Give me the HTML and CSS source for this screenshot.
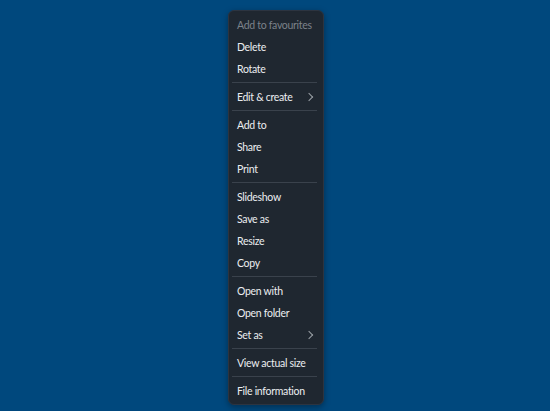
FILE: index.html
```html
<!DOCTYPE html>
<html lang="en">
<head>
    <meta charset="UTF-8">
    <title>Photo menu</title>
    <link rel="stylesheet" href="styles.css">
</head>
<body>
    <div class="desktop">
        <ul class="menu">
            <li class="item disabled">Add to favourites</li>
            <li class="item">Delete</li>
            <li class="item">Rotate</li>
            <li class="separator"></li>
            <li class="item has-sub">Edit &amp; create <span class="chevron"></span></li>
            <li class="separator"></li>
            <li class="item">Add to</li>
            <li class="item">Share</li>
            <li class="item">Print</li>
            <li class="separator"></li>
            <li class="item">Slideshow</li>
            <li class="item">Save as</li>
            <li class="item">Resize</li>
            <li class="item">Copy</li>
            <li class="separator"></li>
            <li class="item">Open with</li>
            <li class="item">Open folder</li>
            <li class="item has-sub">Set as <span class="chevron"></span></li>
            <li class="separator"></li>
            <li class="item">View actual size</li>
            <li class="separator"></li>
            <li class="item">File information</li>
        </ul>
    </div>
</body>
</html>
```
FILE: styles.css
```css
body {
    margin: 0;
    background-color: #00487d;
    font-family: Lato, "Noto Sans", sans-serif;
}
.desktop {
    height: 411px;
    display: flex;
    justify-content: center;
    align-items: flex-start;
    padding-top: 10px;
    box-sizing: border-box;
}
.menu {
    list-style: none;
    margin: 0 0 0 2px;
    padding: 3px 0 2px;
    width: 94px;
    background-color: #1f2730;
    border: 1px solid #2c3440;
    border-radius: 6px;
    box-shadow: 0 2px 6px rgba(0, 0, 0, 0.35);
}
.item {
    height: 22px;
    line-height: 22px;
    padding: 0 7px 0 8px;
    font-size: 10.5px;
    letter-spacing: -0.3px;
    color: #eceef0;
    white-space: nowrap;
    display: flex;
    justify-content: space-between;
    align-items: center;
}
.item.disabled {
    color: #7c828a;
}
.chevron {
    width: 5px;
    height: 5px;
    margin-right: 4px;
    border-top: 1px solid #9aa0a6;
    border-right: 1px solid #9aa0a6;
    transform: rotate(45deg);
}
.separator {
    height: 1px;
    margin: 2px 6px 3px 3px;
    background-color: #3a424c;
}
```
